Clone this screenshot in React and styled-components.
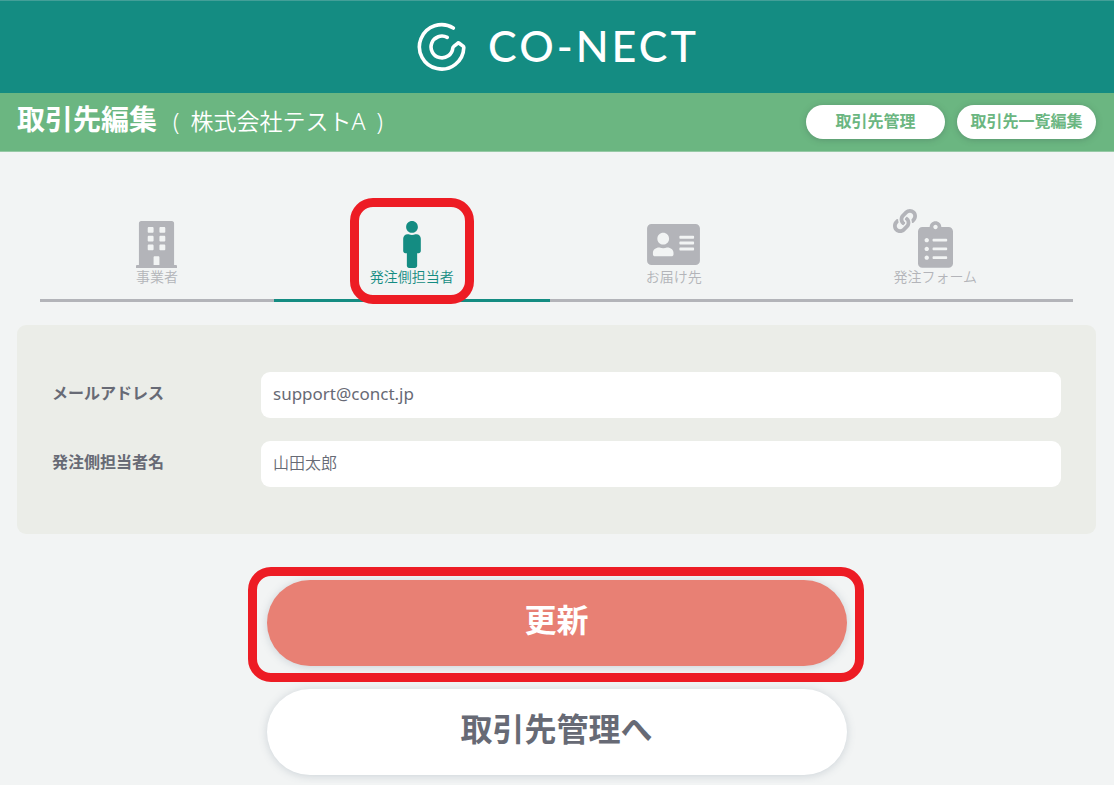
import React from "react";
import styled, { createGlobalStyle, css } from "styled-components";
import { FaBuilding, FaMale, FaAddressCard, FaClipboardList, FaLink } from "react-icons/fa";

const color = {
  teal: "#148c82",
  green: "#6bb681",
  page: "#f2f4f4",
  panel: "#ebede8",
  muted: "#b3b4b9",
  text: "#676a75",
  coral: "#e88074",
  marker: "#ed1c24",
};

const GlobalStyle = createGlobalStyle`
  *, *::before, *::after { box-sizing: border-box; }
  body {
    margin: 0;
    background: ${color.page};
    color: ${color.text};
    font-family: "Noto Sans", "Noto Sans CJK JP", sans-serif;
    font-size: 16px;
  }
  button, input { font: inherit; color: inherit; }
`;

const Header = styled.header`
  display: flex;
  align-items: center;
  justify-content: center;
  gap: 21px;
  height: 93px;
  padding: 0 0 2px 2px;
  border-top: 1px solid #439f98;
  background: ${color.teal};
  color: #fff;
`;

const LogoMark = styled.svg`
  width: 50px;
  height: 50px;
  fill: none;
  stroke: currentColor;
  stroke-width: 3.6;
  stroke-linecap: round;
  stroke-linejoin: round;
`;

const Wordmark = styled.span`
  font-family: Lato, sans-serif;
  font-size: 43px;
  font-weight: 500;
  line-height: 48px;
  letter-spacing: 3px;
`;

const TitleBar = styled.div`
  display: flex;
  align-items: center;
  justify-content: space-between;
  height: 59px;
  padding: 0 18px 0 17px;
  border-bottom: 1px solid #96c9a5;
  background: ${color.green};
`;

const Title = styled.h1`
  display: flex;
  align-items: baseline;
  gap: 16px;
  margin: 0;
  padding-bottom: 4px;
  color: #fff;
  font-size: 28px;
  line-height: 40px;
  font-weight: 700;
`;

const Company = styled.span`
  display: flex;
  gap: 11px;
  font-size: 23px;
  font-weight: 350;
`;

const Actions = styled.div`
  display: flex;
  gap: 12px;
`;

const PillButton = styled.button`
  width: 139px;
  height: 34px;
  padding: 0 0 2px;
  border: 0;
  border-radius: 17px;
  background: #fff;
  box-shadow: 0 1px 6px rgba(60, 90, 80, 0.35);
  color: ${color.green};
  font-weight: 700;
  line-height: 24px;
  white-space: nowrap;
`;

const Main = styled.main`
  padding: 46px 18px 8px 17px;
`;

const Tabs = styled.nav`
  display: flex;
  margin: 0 23px 23px;
`;

const Tab = styled.a`
  position: relative;
  flex: 1 1 auto;
  display: flex;
  flex-direction: column;
  align-items: center;
  padding: 23px 0 13px;
  border-bottom: 3px solid ${(p) => (p.$active ? color.teal : color.muted)};
  color: ${(p) => (p.$active ? color.teal : color.muted)};
  font-size: 14px;
  font-weight: 350;
  line-height: 18px;
  text-decoration: none;
`;

const TabIcon = styled.span`
  position: relative;
  display: flex;

  & > svg {
    width: ${(p) => p.$width}px;
    height: 47px;
  }
`;

const LinkBadge = styled.span`
  position: absolute;
  top: -12px;
  right: 100%;
  margin-right: 1px;
  display: flex;
  font-size: 24px;
`;

const marker = css`
  position: absolute;
  border: 9px solid ${color.marker};
  border-radius: 23px;
  pointer-events: none;
`;

const TabMarker = styled.span`
  ${marker}
  top: 0;
  bottom: -5px;
  left: 50%;
  width: 124px;
  transform: translateX(-50%);
`;

const ButtonMarker = styled.span`
  ${marker}
  inset: -13px -17px -16px -19px;
`;

const Panel = styled.div`
  display: grid;
  gap: 23px;
  padding: 47px 35px;
  border-radius: 9px;
  background: ${color.panel};
`;

const Field = styled.div`
  display: grid;
  grid-template-columns: 185px 1fr;
  gap: 24px;
`;

const Label = styled.label`
  padding-top: 9px;
  font-weight: 700;
  line-height: 24px;
`;

const TextInput = styled.input`
  width: 100%;
  height: 46px;
  padding: 0 12px 4px;
  border: 0;
  border-radius: 9px;
  background: #fff;
  font-weight: 350;

  &[type="email"] {
    font-size: 17px;
    font-weight: 400;
  }
`;

const Buttons = styled.div`
  display: grid;
  gap: 23px;
  max-width: 580px;
  margin: 46px auto 0;
`;

const ButtonSlot = styled.div`
  position: relative;
`;

const LargeButton = styled.button`
  display: block;
  width: 100%;
  height: 86px;
  padding: 0 0 6px;
  border: 0;
  border-radius: 43px;
  background: ${(p) => (p.$primary ? color.coral : "#fff")};
  box-shadow: 0 1px 8px rgba(90, 110, 130, 0.25);
  color: ${(p) => (p.$primary ? "#fff" : color.text)};
  font-size: 32px;
  font-weight: 700;
  line-height: 46px;
`;

const tabs = [
  { label: "事業者", Icon: FaBuilding, width: 41 },
  { label: "発注側担当者", Icon: FaMale, width: 18, active: true },
  { label: "お届け先", Icon: FaAddressCard, width: 53 },
  { label: "発注フォーム", Icon: FaClipboardList, width: 35, linked: true },
];

export default function App() {
  return (
    <>
      <GlobalStyle />
      <Header>
        <LogoMark viewBox="0 0 50 50" aria-hidden="true">
          <path d="M36.3 7A22.2 22.2 0 1 0 46.8 26.6Q46.8 25.6 46 25.1L42.2 22.2Q41.3 21.5 40.6 22.4L36.8 25.4Q36 26 35.8 27A10.9 10.9 0 1 1 30.2 16.4" />
        </LogoMark>
        <Wordmark>CO-NECT</Wordmark>
      </Header>
      <TitleBar>
        <Title>
          取引先編集
          <Company>
            <span>(</span>
            <span>株式会社テストA</span>
            <span>)</span>
          </Company>
        </Title>
        <Actions>
          <PillButton type="button">取引先管理</PillButton>
          <PillButton type="button">取引先一覧編集</PillButton>
        </Actions>
      </TitleBar>
      <Main>
        <Tabs>
          {tabs.map(({ label, Icon, width, active, linked }) => (
            <Tab key={label} href="#" $active={active} aria-current={active ? "page" : undefined}>
              <TabIcon $width={width}>
                {linked && (
                  <LinkBadge>
                    <FaLink />
                  </LinkBadge>
                )}
                <Icon />
              </TabIcon>
              {label}
              {active && <TabMarker />}
            </Tab>
          ))}
        </Tabs>
        <form onSubmit={(e) => e.preventDefault()}>
          <Panel>
            <Field>
              <Label htmlFor="email">メールアドレス</Label>
              <TextInput id="email" type="email" defaultValue="support@conct.jp" />
            </Field>
            <Field>
              <Label htmlFor="person">発注側担当者名</Label>
              <TextInput id="person" type="text" defaultValue="山田太郎" />
            </Field>
          </Panel>
          <Buttons>
            <ButtonSlot>
              <LargeButton type="submit" $primary>更新</LargeButton>
              <ButtonMarker />
            </ButtonSlot>
            <LargeButton type="button">取引先管理へ</LargeButton>
          </Buttons>
        </form>
      </Main>
    </>
  );
}
